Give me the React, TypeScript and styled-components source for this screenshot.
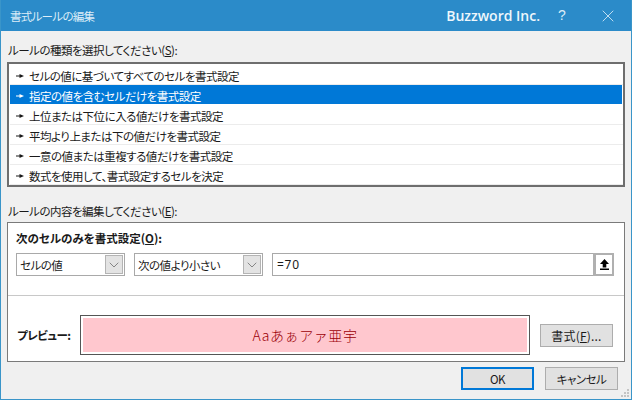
import styled, { createGlobalStyle } from 'styled-components';
import { ChevronDown, X } from 'lucide-react';

const GlobalStyle = createGlobalStyle`
  html, body {
    margin: 0;
    padding: 0;
    background: #f0f0f0;
  }
  * { box-sizing: border-box; }
`;

const Window = styled.div`
  position: relative;
  width: 632px;
  height: 400px;
  display: flex;
  flex-direction: column;
  background: #f0f0f0;
  border: 1px solid #3a95c9;
  border-top: 0;
  font-family: "Noto Sans CJK JP", "Noto Sans", sans-serif;
  font-size: 11.5px;
  letter-spacing: -0.5px;
  font-feature-settings: "palt";
  color: #1a1a1a;
  overflow: hidden;
`;

const TitleBar = styled.div`
  height: 31px;
  flex: none;
  display: flex;
  align-items: center;
  background: #2b8bc9;
  color: #dcedf8;
  padding: 0 0 0 9px;
`;

const Title = styled.span`
  flex: 1;
  letter-spacing: -0.7px;
`;

const Brand = styled.span`
  font-family: "Open Sans", sans-serif;
  font-size: 14px;
  font-weight: 600;
  letter-spacing: 0;
  color: #eef7fc;
  margin-right: 16px;
`;

const HelpMark = styled.span`
  font-family: "Liberation Sans", sans-serif;
  font-size: 14px;
  letter-spacing: 0;
  width: 12px;
  text-align: center;
  margin-right: 30px;
  position: relative;
  top: -1px;
`;

const CloseMark = styled.span`
  display: flex;
  margin-right: 13px;
  color: #f2f9fd;
`;

const Body = styled.div`
  flex: 1;
  display: flex;
  flex-direction: column;
  padding: 0 7px 0 6px;
`;

const GroupLabel = styled.div<{ $top: number; $bottom: number }>`
  height: 18px;
  line-height: 18px;
  margin: ${p => p.$top}px 0 ${p => p.$bottom}px 1px;
  u { text-underline-offset: 1px; }
`;

const RuleList = styled.ul`
  list-style: none;
  margin: 0;
  padding: 1px 1px 0 1px;
  width: 618px;
  height: 125px;
  background: #fff;
  border: 2px solid #6e6e6e;
  display: flex;
  flex-direction: column;
`;

const Rule = styled.li<{ $selected?: boolean }>`
  height: 20px;
  flex: none;
  display: flex;
  align-items: center;
  gap: 5px;
  padding: 2px 0 0 6px;
  margin-right: ${p => (p.$selected ? '0' : '-1px')};
  background: ${p => (p.$selected ? '#0078d7' : '#fff')};
  color: ${p => (p.$selected ? '#fff' : '#1a1a1a')};
  border-bottom: 1px solid ${p => (p.$selected ? '#fff' : '#ececec')};
  background-clip: padding-box;
`;

const Bullet = styled.svg`
  width: 8px;
  height: 6px;
  flex: none;
`;

const ContentPanel = styled.div`
  width: 618px;
  height: 140px;
  background: #fff;
  border: 1px solid #7a7a7a;
  display: flex;
  flex-direction: column;
`;

const BoldLabel = styled.div`
  font-weight: 700;
  height: 16px;
  line-height: 16px;
  letter-spacing: 0;
  margin: 7px 0 7px 8px;
  u { text-underline-offset: 1px; }
`;

const ConditionRow = styled.div`
  display: flex;
  gap: 9px;
  margin-left: 8px;
  height: 23px;
`;

const Select = styled.div<{ $width: number }>`
  width: ${p => p.$width}px;
  height: 23px;
  display: flex;
  align-items: center;
  justify-content: space-between;
  padding: 0 1px 0 3px;
  background: #fff;
  border: 1px solid #a9a9a9;
`;

const DropButton = styled.span`
  width: 18px;
  height: 19px;
  display: flex;
  align-items: center;
  justify-content: center;
  background: #e3e3e3;
  border: 1px solid #b4b4b4;
  color: #555;
`;

const FormulaField = styled.div`
  width: 342px;
  height: 23px;
  display: flex;
  align-items: center;
  justify-content: space-between;
  border: 1px solid #a9a9a9;
  padding-left: 4px;
  font-family: "Noto Sans", sans-serif;
  font-size: 12px;
  letter-spacing: 0.7px;
`;

const RefButton = styled.span`
  width: 21px;
  height: 23px;
  margin: -1px -1px -1px 0;
  display: flex;
  align-items: center;
  justify-content: center;
  background: #fff;
  border: solid #b0b0b0;
  border-width: 2px 2px 2px 3px;
`;

const Divider = styled.hr`
  margin: 19px 0 0 0;
  height: 1px;
  border: 0;
  background: #c8c8c8;
`;

const PreviewRow = styled.div`
  display: flex;
  align-items: center;
  margin: 19px 0 0 9px;
`;

const PreviewLabel = styled.span`
  width: 63px;
  font-weight: 700;
`;

const PreviewFrame = styled.div`
  width: 450px;
  height: 40px;
  padding: 2px;
  border: 1px solid #555;
  background: #fff;
`;

const PreviewText = styled.div`
  height: 100%;
  display: flex;
  align-items: center;
  justify-content: center;
  background: #ffc7ce;
  color: #9c0006;
  font-size: 14px;
  font-weight: 300;
  letter-spacing: 0.6px;
  font-feature-settings: normal;
`;

const DialogButton = styled.button<{ $primary?: boolean }>`
  width: 73px;
  height: 23px;
  padding: 0;
  font: inherit;
  letter-spacing: inherit;
  font-feature-settings: inherit;
  color: #1a1a1a;
  background: #e1e1e1;
  border: ${p => (p.$primary ? '2px solid #0078d7' : '1px solid #adadad')};
`;

const FormatButton = styled(DialogButton)`
  margin-left: 10px;
  font-size: 12px;
  letter-spacing: 0.2px;
`;

const Footer = styled.div`
  display: flex;
  justify-content: flex-end;
  gap: 11px;
  margin-top: 5px;
  padding-right: 6px;
`;

const Grip = styled.svg`
  position: absolute;
  right: 1px;
  bottom: 1px;
  width: 10px;
  height: 10px;
`;

const rules = [
  'セルの値に基づいてすべてのセルを書式設定',
  '指定の値を含むセルだけを書式設定',
  '上位または下位に入る値だけを書式設定',
  '平均より上または下の値だけを書式設定',
  '一意の値または重複する値だけを書式設定',
  '数式を使用して、書式設定するセルを決定',
];

const App = () => {
  return (
    <>
      <GlobalStyle />
      <Window>
        <TitleBar>
          <Title>書式ルールの編集</Title>
          <Brand>Buzzword Inc.</Brand>
          <HelpMark>?</HelpMark>
          <CloseMark><X size={20} strokeWidth={0.9} /></CloseMark>
        </TitleBar>
        <Body>
          <GroupLabel $top={10} $bottom={3}>ルールの種類を選択してください(<u>S</u>):</GroupLabel>
          <RuleList>
            {rules.map((rule, i) => (
              <Rule key={rule} $selected={i === 1}>
                <Bullet viewBox="0 0 8 6">
                  <path d="M0 2.4h3.5V1L8 3 3.5 5V3.6H0z" fill="currentColor" />
                </Bullet>
                {rule}
              </Rule>
            ))}
          </RuleList>
          <GroupLabel $top={15} $bottom={2}>ルールの内容を編集してください(<u>E</u>):</GroupLabel>
          <ContentPanel>
            <BoldLabel>次のセルのみを書式設定(<u>O</u>):</BoldLabel>
            <ConditionRow>
              <Select $width={109}>
                セルの値
                <DropButton><ChevronDown size={16} strokeWidth={1} /></DropButton>
              </Select>
              <Select $width={129}>
                次の値より小さい
                <DropButton><ChevronDown size={16} strokeWidth={1} /></DropButton>
              </Select>
              <FormulaField>
                =70
                <RefButton>
                  <svg width="9" height="11" viewBox="0 0 9 11">
                    <path d="M4.5 0L9 5H6.3v3.5H2.7V5H0z M0 9.5h9V11H0z" fill="#000" />
                  </svg>
                </RefButton>
              </FormulaField>
            </ConditionRow>
            <Divider />
            <PreviewRow>
              <PreviewLabel>プレビュー:</PreviewLabel>
              <PreviewFrame>
                <PreviewText>Aaあぁアァ亜宇</PreviewText>
              </PreviewFrame>
              <FormatButton>書式(<u>F</u>)...</FormatButton>
            </PreviewRow>
          </ContentPanel>
          <Footer>
            <DialogButton $primary>OK</DialogButton>
            <DialogButton>キャンセル</DialogButton>
          </Footer>
        </Body>
        <Grip viewBox="0 0 10 10">
          <g fill="#c4c4c4">
            <rect x="7" y="1" width="2" height="2" />
            <rect x="4" y="4" width="2" height="2" />
            <rect x="7" y="4" width="2" height="2" />
            <rect x="1" y="7" width="2" height="2" />
            <rect x="4" y="7" width="2" height="2" />
            <rect x="7" y="7" width="2" height="2" />
          </g>
        </Grip>
      </Window>
    </>
  );
};

export default App;
